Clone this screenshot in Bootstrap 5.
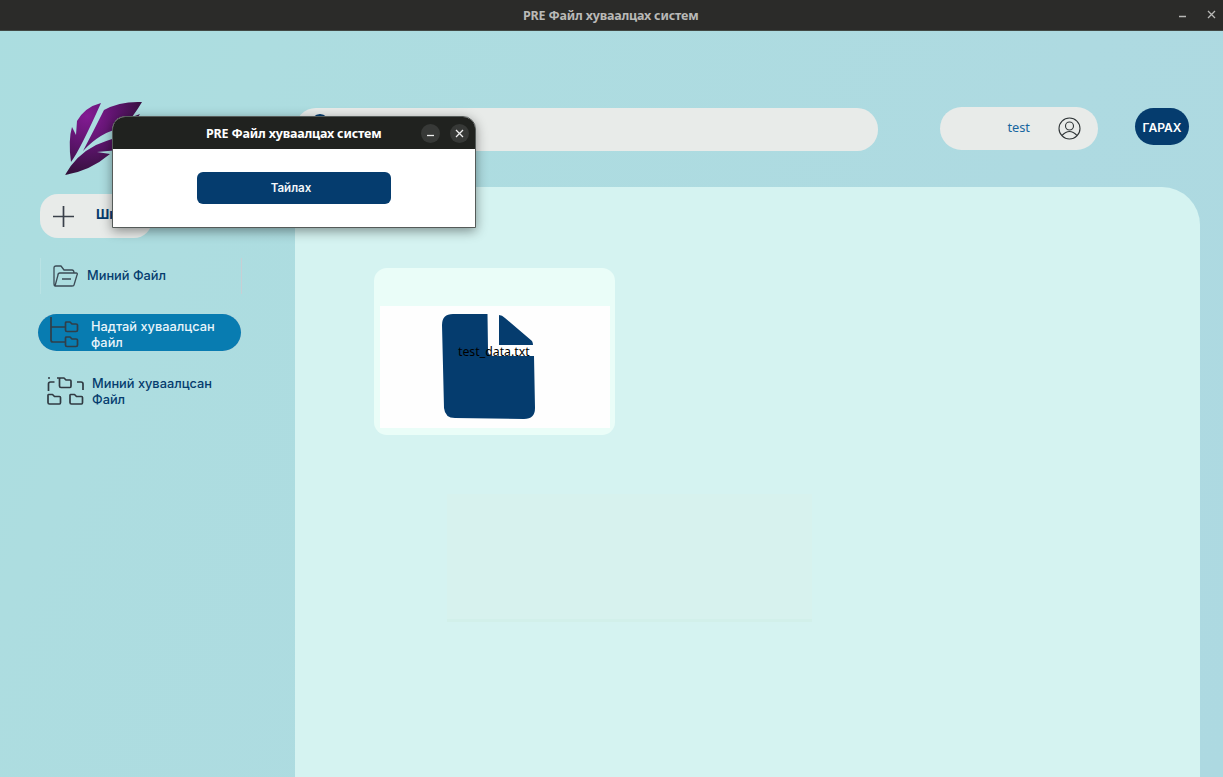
<!DOCTYPE html>
<html lang="mn">
<head>
<meta charset="utf-8">
<title>PRE Файл хуваалцах систем</title>
<link href="https://cdn.jsdelivr.net/npm/bootstrap@5.3.0/dist/css/bootstrap.min.css" rel="stylesheet">
<style>
:root{--navy:#053c6e;--pill:#e8ebe9}
body{height:777px;overflow:hidden;font-family:Inter,"Noto Sans",sans-serif;font-size:12.8px;line-height:15.4px;background:linear-gradient(115deg,#abdde0 0,#addde0 18%,#aedae1 70%,#add9e1 100%)}
svg{display:block;flex:none}
.window-title{font-family:"Noto Sans",sans-serif;font-weight:700;font-size:12.5px;letter-spacing:-.19px;line-height:18px;white-space:nowrap;padding-top:1px}
.topbar{height:31px;background:#2b2b29;border-bottom:1px solid #414844;color:#b9b9b7;padding-right:5px}
.topbar .window-title{width:175px;margin-left:523px}
.workspace{height:746px}
.sidebar{width:295px;padding:70px 0 0 38px}
.logo{margin-left:27px}
.create-btn{width:112px;height:44px;margin:18px 0 0 2px;border-radius:18px;background:var(--pill);color:var(--navy);font-weight:700;font-size:13.4px;padding-left:13px}
.create-text{width:56px;padding-bottom:3px}
.side-link{color:var(--navy);font-weight:500;text-decoration:none}
.link-own{width:202px;height:36px;margin:20px 0 0 2px;padding-left:12px;border-left:1px solid #b9e2e4;border-right:1px solid #c8cfd4}
.link-own span{margin-left:9px}
.link-in{width:203px;height:37px;margin-top:20px;padding-left:12px;border-radius:19px;background:#087cb1;color:#e9f4fa;box-shadow:0 0 1px #d5cfd3}
.link-in span{margin-left:12px;padding-top:4px}
.link-out{width:203px;height:37px;margin-top:22px;padding-left:9px}
.toolbar{height:155.500px;padding:76px 35px 0 0}
.search{width:583px;height:43px;margin-top:1px;border-radius:21px;background:var(--pill);padding:6px 0 0 15px}
.user{width:158px;height:43px;margin:0 37px 0 62px;border-radius:22px;background:var(--pill);padding-right:17px;font-family:"Noto Sans",sans-serif;font-size:12.8px;color:#1766a0}
.user span{margin-right:28px;padding-bottom:2px}
.leave{width:54px;height:37px;margin-top:1px;border-radius:19px;background:var(--navy);color:#fff;font-weight:600;font-size:12.1px;padding-top:2px}
.files{width:905px;height:590.500px;border-radius:0 38px 0 0;background:#d5f3f1;padding:81.500px 0 0 79px}
.file-tile{width:241px;height:167px;border-radius:13px;background:#eafdf8;padding:38px 5px 7px 6px}
.file-face{background:#fefefe;height:122px;padding:7px 0 0 62px}
.file-name{left:78px;top:38px;font-family:"Noto Sans",sans-serif;font-size:12.3px;color:#000;line-height:16px}
.ghost{width:365px;height:128px;margin:59px 0 0 73px;background:#d7f2ee;border-bottom:3px solid #d2f0ea}
.dialog-box{left:112px;top:116px;width:364px;height:112px;border:1px solid #555b59;border-radius:13px 13px 0 0;background:#fff;box-shadow:0 3px 12px rgba(0,0,0,.42)}
.dialog-head{height:32px;background:#20221f;border-radius:12px 12px 0 0;color:#fff;padding-right:6px}
.dialog-head .window-title{width:175px;margin-left:93px}
.head-buttons{gap:10px}
.round-btn{width:19px;height:19px;border-radius:50%;background:#373937}
.open-btn{width:194px;height:32px;margin:23px 0 0 84px;border-radius:6px;background:var(--navy);color:#f4f7fa;font-weight:600;font-size:11.6px;padding:1px 6px 0 0}
</style>
</head>
<body class="position-relative">
<header class="topbar d-flex align-items-center">
  <div class="window-title">PRE Файл хуваалцах систем</div>
  <svg class="ms-auto" width="40" height="16" viewBox="0 0 40 16" fill="none" stroke="#b8b8b6" stroke-width="1.3"><path d="M1 9.500h7M30 4l7 7M37 4l-7 7"/></svg>
</header>
<div class="workspace d-flex">
  <aside class="sidebar flex-shrink-0">
    <svg class="logo" width="80" height="75" viewBox="0 0 80 75">
      <defs><radialGradient id="leaf" gradientUnits="userSpaceOnUse" cx="22" cy="15" r="62"><stop stop-color="#831b93"/><stop offset=".5" stop-color="#5c146b"/><stop offset="1" stop-color="#301037"/></radialGradient></defs>
      <g fill="url(#leaf)"><path d="M36 2Q20 6 12 20l-1 14L7 26Q3 39 6 61Q15 49 36 2Z"/><path d="M39 9Q55 0 77 1Q73 8 67 16l8-3Q69 24 59 26Q35 31 18 50Q28 31 39 9Z"/><path d="M0 74Q11 54 31 44Q50 36 69 32Q62 43 54 49l-22 2 13 2Q25 70 0 74Z"/></g>
    </svg>
    <div class="create-btn d-flex align-items-center">
      <svg width="21" height="21" viewBox="0 0 21 21" stroke="#39404a" stroke-width="1.7"><path d="M10.500 0v21M0 10.500h21"/></svg>
      <span class="create-text ms-auto text-nowrap overflow-hidden">Шинэ</span>
    </div>
    <a class="side-link link-own d-flex align-items-center">
      <svg width="25" height="23" viewBox="0 0 25 23" fill="none" stroke="#3b4b55" stroke-width="1.3" stroke-linejoin="round"><path d="M2 21Q1 21 1 19V3Q1 1 3 1h5l3 4h8q2 0 2 3M2 21L5 10Q5 8 7 8h16q2 0 1 2l-3 10q0 1-2 1ZM9 14h9"/></svg>
      <span>Миний Файл</span>
    </a>
    <a class="side-link link-in d-flex align-items-center">
      <svg width="29" height="31" viewBox="0 0 29 31" fill="none" stroke="#303e48" stroke-width="1.7" stroke-linejoin="round"><path d="M1 0v23q0 2 2 2h12M1 10h14M16 5h4l2 2h4q1.500 0 1.500 1v5q0 1.500-1.500 1.500H17q-1.500 0-1.500-1.500V6ZM16 20h4l2 2h4q1.500 0 1.500 1v5q0 1.500-1.500 1.500H17q-1.500 0-1.500-1.500V21Z"/></svg>
      <span>Надтай хуваалцсан<br>файл</span>
    </a>
    <a class="side-link link-out d-flex align-items-center">
      <svg width="37" height="31" viewBox="0 0 37 31" fill="none" stroke="#303a42" stroke-width="1.7" stroke-linejoin="round"><path d="M1 2h2M10 2h4M1.500 15V8q0-2 2-2h4M30 6h4q2 0 2 2v6M13 2h4l2 2h4q1 0 1 1v5q0 1.500-1 1.500H14q-1.500 0-1.500-1.500V3ZM1.500 18.500h4l2 2h5q1 0 1 1v5q0 1.500-1 1.500H2.500q-1.500 0-1.500-1.500V19ZM23.500 18.500h4l2 2h5q1 0 1 1v5q0 1.500-1 1.500h-10q-1.500 0-1.500-1.500V19Z"/></svg>
      <span class="ms-2">Миний хуваалцсан<br>Файл</span>
    </a>
  </aside>
  <main>
    <div class="toolbar d-flex align-items-start">
      <div class="search"><svg width="20" height="20" viewBox="0 0 20 20" fill="none" stroke="#053c6e" stroke-width="3"><circle cx="10" cy="9" r="7.500"/></svg></div>
      <div class="user d-flex align-items-center justify-content-end">
        <span>test</span>
        <svg width="23" height="23" viewBox="0 0 23 23" fill="none" stroke="#303638" stroke-width="1.1"><circle cx="11.500" cy="11.500" r="10.500"/><circle cx="11.500" cy="9" r="4"/><path d="M4 18.500q7.500-8 15 0"/></svg>
      </div>
      <div class="leave d-flex align-items-center justify-content-center">ГАРАХ</div>
    </div>
    <section class="files">
      <div class="file-tile">
        <div class="file-face position-relative">
          <svg width="95" height="108" viewBox="0 0 95 108" fill="#053c6e"><path d="M11 1H45.500L46 37Q46 43 52 43H92L93 95Q93 106 82 106L13 105Q3 105 2 95L0 12Q0 1 11 1Z"/><path d="M57 2q3 0 6 3l27 23q1 2 1 4H57Z"/></svg>
          <span class="file-name position-absolute">test_data.txt</span>
        </div>
      </div>
      <div class="ghost"></div>
    </section>
  </main>
</div>
<div class="dialog-box position-absolute">
  <div class="dialog-head d-flex align-items-center">
    <div class="window-title">PRE Файл хуваалцах систем</div>
    <div class="head-buttons d-flex ms-auto">
      <div class="round-btn"><svg width="19" height="19" viewBox="0 0 19 19" stroke="#eee" stroke-width="1.3"><path d="M6 11.500h7"/></svg></div>
      <div class="round-btn"><svg width="19" height="19" viewBox="0 0 19 19" stroke="#eee" stroke-width="1.3"><path d="M6 6l7 7M13 6l-7 7"/></svg></div>
    </div>
  </div>
  <div class="open-btn d-flex align-items-center justify-content-center">Тайлах</div>
</div>
<script src="https://cdn.jsdelivr.net/npm/bootstrap@5.3.0/dist/js/bootstrap.bundle.min.js"></script>
</body>
</html>
